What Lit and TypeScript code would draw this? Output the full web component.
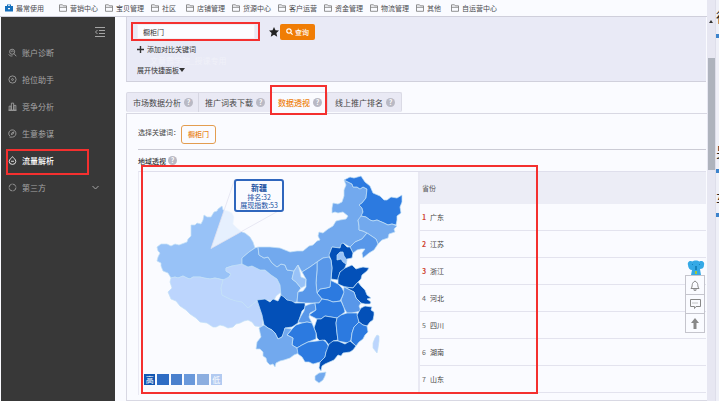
import { LitElement, html, svg, css } from "lit";
import { customElement } from "lit/decorators.js";
import { classMap } from "lit/directives/class-map.js";

const bookmarks = ["营销中心", "宝贝管理", "社区", "店铺管理", "货源中心", "客户运营", "资金管理", "物流管理", "其他", "自运营中心"];

const glyphs = {
  search: svg`<circle cx="5.5" cy="5" r="3.4"/><path d="M8 7.5l3 3.5M1 8.5c1 2 3 2.5 5 2M4.5 5.5a1.2 1.2 0 1 1 2 0"/>`,
  target: svg`<circle cx="6" cy="6" r="4.8"/><circle cx="6" cy="6" r="1.2"/>`,
  bars: svg`<path d="M1.500 11V5.500h2.500V11zM4.500 11V1.500h3V11zM8 11V4.500h2.500V11zM.5 11h11"/>`,
  compass: svg`<path d="M2.500 9.500A4.800 4.800 0 1 1 6 10.800H2M4.500 7.500L5.200 5.200l2.600-1.300-.8 2.500z"/>`,
  drop: svg`<path d="M6 .8C7 2.500 10.400 4.500 10.400 7.200a4.400 4 0 0 1-8.800 0C1.600 4.500 5 2.500 6 .8zM4 7h4"/>`,
  ring: svg`<circle cx="6" cy="6" r="4.6" stroke-dasharray="6 1"/>`,
};

const menu: { label: string; icon: keyof typeof glyphs; active?: boolean; more?: boolean }[] = [
  { label: "账户诊断", icon: "search" },
  { label: "抢位助手", icon: "target" },
  { label: "竞争分析", icon: "bars" },
  { label: "生意参谋", icon: "compass" },
  { label: "流量解析", icon: "drop", active: true },
  { label: "第三方", icon: "ring", more: true },
];

const tabs = ["市场数据分析", "推广词表下载", "数据透视", "线上推广排名"];
const provinces = ["广东", "江苏", "浙江", "河北", "四川", "湖南", "山东"];

// Shade level (0 = highest) and outline of every region on the map.
const regions: [string, number, string][] = [
  ["新疆", 4, "222,206 218,209 217,211 214,212 211,217 207,217 204,215 203,220 201,224 197,223 195,225 191,225 191,236 188,239 187,242 179,245 175,244 171,246 167,244 161,244 157,247 158,251 160,253 158,257 157,261 161,263 161,266 163,271 168,273 171,278 175,277 178,278 183,276 187,278 190,279 193,277 200,277 204,278 210,279 215,278 220,279 228,281 229,277 231,274 226,271 226,268 232,266 238,266 242,264 242,258 249,252 255,248 253,242 250,237 245,233 242,232 237,228 233,224 234,217 232,213 228,211 223,210"],
  ["西藏", 5, "171,278 175,277 178,278 183,276 187,278 190,279 193,277 200,277 204,278 210,279 215,278 223,280 221,288 222,295 230,299 242,302 248,308 253,304 258,300 262,306 263,317 262,327 255,326 252,322 248,320 244,321 240,323 236,324 233,327 228,328 224,326 220,325 216,327 213,327 207,323 200,322 196,318 190,314 186,310 180,306 176,301 171,299 168,292 172,288 170,282"],
  ["青海", 5, "229,277 231,274 226,271 226,268 232,266 242,264 248,267 252,266 260,270 265,270 271,275 277,279 280,285 281,292 276,296 273,302 268,300 258,300 253,304 248,308 242,302 236,301 230,299 222,295 221,288 223,280"],
  ["甘肃", 3, "242,264 242,258 249,252 255,248 258,247 259,255 264,258 268,257 272,263 277,267 281,264 285,265 287,270 294,271 292,279 296,282 301,288 298,292 297,302 290,303 286,299 281,296 280,285 277,279 271,275 265,270 260,270 252,266 248,267"],
  ["内蒙古", 3, "258,247 270,247 280,248 290,252 297,251 303,251 309,246 313,245 317,241 320,240 318,236 319,232 323,233 328,229 333,226 336,221 340,220 346,219 348,216 343,212 338,213 335,212 332,213 332,208 333,203 338,204 342,202 344,196 344,190 346,185 344,180 348,182 352,184 353,187 357,187 360,189 363,187 367,189 366,198 362,203 359,205 362,208 363,212 361,217 358,220 359,226 359,230 363,231 367,233 362,239 355,242 350,247 343,243 340,248 332,247 330,253 329,258 323,258 317,262 310,267 302,272 298,265 294,271 287,270 285,265 281,264 277,267 272,263 268,257 264,258 259,255"],
  ["黑龙江", 1, "344,180 346,179 350,177 354,178 361,176 365,182 370,186 373,193 380,196 384,200 387,200 391,197 397,198 402,195 402,202 400,207 401,213 397,216 397,220 396,225 392,224 388,225 384,223 377,220 373,221 370,220 366,217 361,216 363,212 362,208 359,205 362,203 366,198 367,189 363,187 360,189 357,187 353,187 352,184 348,182"],
  ["吉林", 3, "361,216 366,217 370,220 373,221 377,220 384,223 388,225 392,224 397,226 394,229 395,232 389,234 388,238 385,239 382,240 378,244 376,239 373,237 367,233 363,231 359,230 359,226 358,220"],
  ["辽宁", 2, "367,233 373,237 376,239 378,244 374,250 369,253 363,258 362,253 365,249 361,249 357,250 353,253 350,247 355,242 362,239"],
  ["河北", 0, "332,247 340,248 341,244 343,243 347,247 350,247 353,253 352,258 347,259 346,265 344,270 340,272 338,280 331,279 332,268 331,260 329,255"],
  ["京津", 4, "337,255 340,252 343,252 344,256 347,260 346,264 343,262 341,259 337,260"],
  ["山东", 0, "340,272 345,268 352,265 356,269 359,268 363,267 369,268 367,271 362,275 361,279 357,283 353,288 345,287 338,284 338,278"],
  ["江苏", 0, "345,287 353,288 358,282 361,286 365,290 367,295 371,298 367,299 371,302 370,304 365,304 361,303 356,298 354,292 350,290"],
  ["安徽", 2, "344,287 350,290 354,292 356,298 361,303 359,306 361,311 352,313 347,313 344,308 341,300 343,295"],
  ["河南", 1, "320,289 326,288 330,287 330,280 338,284 342,288 344,292 342,297 340,301 333,302 328,300 322,299 317,293"],
  ["山西", 2, "317,262 323,258 329,257 331,260 332,268 331,279 330,287 326,288 320,289 317,293 316,283 317,270"],
  ["陕西", 2, "310,267 317,262 317,270 316,283 317,293 322,299 319,303 315,303 305,303 297,302 298,292 303,291 306,287 306,279 302,272"],
  ["宁夏", 4, "294,271 298,265 300,272 301,277 306,279 305,286 301,288 296,282 292,279"],
  ["四川", 0, "257,300 265,299 270,302 273,299 278,301 281,295 284,297 287,300 292,301 295,303 305,303 305,308 302,311 300,317 298,323 292,327 285,328 284,333 282,337 278,339 275,333 272,330 268,328 264,325 262,315"],
  ["重庆", 2, "305,306 310,304 315,303 316,310 310,313 309,317 312,323 307,322 302,323 298,322 301,316 304,311"],
  ["湖北", 1, "315,303 319,303 322,299 328,300 333,302 341,301 344,308 345,312 341,315 337,318 331,317 325,316 321,319 317,319 309,315 316,310"],
  ["湖南", 0, "317,319 321,319 325,316 331,317 337,318 336,323 337,333 338,340 333,341 329,345 325,340 320,341 317,338 316,333 314,328"],
  ["江西", 1, "337,318 341,315 347,313 357,313 359,322 354,327 352,333 351,340 348,343 338,341 337,333 336,323"],
  ["浙江", 0, "361,308 365,306 372,307 371,310 374,312 374,315 373,320 370,322 367,326 363,325 359,322 357,315"],
  ["福建", 1, "359,322 363,325 367,326 368,332 365,335 363,339 359,342 356,346 351,341 352,333 354,327"],
  ["贵州", 1, "292,329 296,325 302,323 307,322 312,323 314,328 316,333 316,339 308,342 302,345 297,348 292,345 293,338 287,335"],
  ["云南", 3, "259,328 264,325 268,328 272,330 275,333 278,339 282,337 285,328 292,329 287,335 293,338 292,345 297,348 299,353 294,355 290,358 284,360 280,361 276,363 275,367 273,364 270,365 267,362 266,358 263,356 263,352 260,349 256,349 257,342 261,337"],
  ["广西", 1, "297,348 302,345 308,342 317,341 323,340 326,342 329,347 326,352 325,357 320,362 313,364 309,362 305,362 302,357 298,354"],
  ["广东", 0, "329,344 333,341 338,341 345,344 350,341 356,346 353,350 350,352 343,353 341,356 338,355 334,360 325,364 322,366 321,371 319,368 320,362 325,357 326,352"],
  ["海南", 3, "315,376 319,373 326,372 325,376 323,380 319,383 315,380"],
  ["台湾", 5, "377,335 379,336 379,341 378,348 377,353 373,348 373,343 375,338"],
];

@customElement("china-map")
export class ChinaMap extends LitElement {
  static styles = css`
    :host { display: block; position: relative; }
    .map { display: block; width: 100%; }
    .r0 { fill: #0350b8; } .r1 { fill: #2c7ae0; } .r2 { fill: #5897e9; }
    .r3 { fill: #72a9ee; } .r4 { fill: #98c2f7; } .r5 { fill: #bcd5fd; }
    .region { stroke: #c3e1f7; stroke-width: 0.7; stroke-linejoin: round; }
    .pointer { fill: #fafbff; fill-opacity: 0.8; stroke: #e2e2f0; stroke-width: 0.8; }
    .tip {
      position: absolute; left: 95px; top: 7px; width: 50px; box-sizing: border-box;
      border: 2px solid #2f66bd; border-radius: 3px; background: #fafbff;
      padding: 1px 0; text-align: center; font-size: 7px; line-height: 8px; color: #174f9f; white-space: nowrap;
    }
    .tip strong, .tip span { display: block; }
    .tip strong { font-size: 8px; line-height: 11px; }
    .legend {
      position: absolute; left: 5px; bottom: 10px; width: 78px; display: grid;
      grid-template-columns: repeat(6, 1fr); gap: 2px; font-size: 8px; line-height: 11px; color: #fff; text-align: center;
    }
    .legend span { height: 11px; overflow: hidden; }
    .l0 { background: #1358b4; } .l1 { background: #2e6cc4; } .l2 { background: #4a80cd; }
    .l3 { background: #6a99db; } .l4 { background: #8caee0; } .l5 { background: #b2caf1; }
  `;
  render() {
    return html`
      <svg class="map" viewBox="139 172 279 223" role="img" aria-label="地域透视">
        ${regions.map(([name, level, points]) => svg`<polygon class="region r${level}" points=${points}><title>${name}</title></polygon>`)}
        <path class="pointer" d="M234.500 180L211 248.500L281 209.500z" />
      </svg>
      <div class="tip"><strong>新疆</strong><span>排名:32</span><span>展现指数:53</span></div>
      <div class="legend">
        ${["高", "", "", "", "", "低"].map((t, i) => html`<span class="l${i}">${t}</span>`)}
      </div>`;
  }
}

@customElement("app-root")
export class AppRoot extends LitElement {
  static styles = css`
    :host {
      display: flex; min-height: 100vh; overflow: hidden; background: #fafbff; color: #444;
      font: 7px/10px "Noto Sans CJK SC", "Noto Sans", sans-serif;
    }
    * { box-sizing: border-box; }
    svg { display: block; fill: none; stroke: currentColor; flex: none; }
    svg.solid { stroke: none; fill: currentColor; }
    a { color: inherit; text-decoration: none; }
    button, input { font: inherit; color: inherit; margin: 0; padding: 0; }
    button { cursor: pointer; border: 0; background: none; }
    .window { flex: 1; min-width: 0; display: flex; flex-direction: column; }
    .bookmarks {
      height: 17px; display: flex; align-items: center; gap: 7px; padding-left: 5px;
      border-bottom: 1px solid #cfcfdb; white-space: nowrap; color: #4b4b50;
    }
    .bookmarks a { display: flex; align-items: center; gap: 3px; min-width: 28px; }
    .bookmarks a:first-child { margin-right: 8px; }
    .bookmarks svg { color: #777; }
    .body { flex: 1; display: flex; }
    .side { width: 114px; margin-left: 1px; background: #383838; color: #a5a5a5; font-size: 8px; flex: none; }
    .fold { display: block; margin: 10px 10px 2px auto; height: 10px; }
    .side a { display: flex; align-items: center; gap: 5px; height: 27px; padding: 0 16px 0 7px; position: relative; }
    .side .active { color: #fff; font-weight: 500; }
    .side .chevron { margin-left: auto; }
    .mark::after { content: ""; position: absolute; border: 2px solid #f4302f; pointer-events: none; z-index: 2; }
    .side .mark::after { left: 5px; right: 26px; top: 2px; bottom: -1px; }
    .main { flex: 1; min-width: 0; padding-left: 11px; position: relative; }
    .search {
      height: 65px; background: #e9eaf6; border-left: 1px solid #d4d4e0; border-bottom: 1px solid #d0d0dc;
      padding: 7px 10px 0; margin-right: 1px; position: relative; color: #333;
    }
    .line { display: flex; align-items: center; height: 15px; }
    .field { position: relative; width: 118px; height: 15px; }
    .field input { width: 100%; height: 15px; border: 1px solid #f0f0f6; background: #fcfcff; padding: 0 5px; display: block; outline: 0; }
    .field.mark::after { inset: -2px -5px -2px -6px; }
    .star { margin: 0 1px 0 14px; color: #222; }
    .go { display: flex; align-items: center; justify-content: center; gap: 2px; width: 35px; height: 16px; border-radius: 2px; background: #f07d05; color: #fff; font-weight: 500; }
    .add, .expand { display: flex; align-items: center; gap: 3px; margin-top: 5px; }
    .expand { margin-top: 11px; gap: 0; }
    .water { position: absolute; left: 23px; top: 40px; font-size: 8px; line-height: 8px; color: #f0f1f9; }
    .tabs { display: flex; width: 276px; margin-top: 10px; height: 20px; background: #e9e9f4; border: 1px solid #dadae5; border-bottom: 0; border-radius: 2px; }
    .tabs button { display: flex; align-items: center; gap: 3px; padding: 0 5px 0 6px; font-size: 8px; border-right: 1px solid #d6d6e2; position: relative; white-space: nowrap; }
    .tabs button:last-child { border: 0; padding-left: 7px; }
    .tabs .on { background: #fafbff; color: #ee820d; font-weight: 500; padding-left: 7px; }
    .tabs .mark::after { inset: -8px 0 -3px -1px; }
    .help { width: 9px; height: 9px; border-radius: 50%; background: #b9b9c4; color: #fff; line-height: 9px; font-size: 7px; font-weight: 700; text-align: center; }
    .panel { margin: 1px 0 0; border: 1px solid #d8d8e3; border-right: 0; padding: 0 1px 5px 11px; }
    .pick { height: 36px; display: flex; align-items: center; gap: 1px; border-bottom: 1px solid #cbcbd5; color: #444; }
    .pick span { padding-bottom: 0; }
    .chip { width: 35px; height: 19px; border: 1px solid #e39d50; border-radius: 3px; color: #e88111; font-weight: 500; margin-top: 5px; }
    .title { display: flex; align-items: center; gap: 2px; height: 21px; margin: 0; font-size: 7px; font-weight: 500; color: #333; }
    .geo { position: relative; display: grid; grid-template-columns: 279px 1fr; border-top: 1px solid #dfdfec; border-left: 1px solid #e9e9f3; }
    .geo.mark::after { left: 2px; top: -7px; right: 168px; bottom: 1px; }
    table { border-collapse: separate; border-spacing: 0; width: 100%; border-left: 2px solid #e9e9f3; align-self: start; }
    th { height: 32px; padding: 0 2px; background: #ecedf6; text-align: left; font-weight: 400; color: #555; }
    td { height: 27px; padding: 0 2px; border-bottom: 1px solid #e3e3ee; }
    .rank { display: inline-block; width: 8px; color: #666; }
    .top { color: #cf4431; font-weight: 700; }
    .tools { position: absolute; right: 2px; top: 243px; width: 20px; z-index: 3; }
    .tools button { display: grid; place-items: center; width: 20px; height: 20px; border: 1px solid #c5c5cd; background: #fafbff; margin-top: -1px; color: #888; }
    .tools .pet { margin: 0 0 0 auto; }
    .scroll { width: 8px; background: #e7e7f2; flex: none; display: flex; flex-direction: column; align-items: center; padding-top: 20px; }
    .thumb { width: 7px; height: 112px; margin-top: 35px; background: #aeb3bd; }
    .edge { width: 4px; flex: none; background: #eff0f8; border-left: 1px solid #dedeea; overflow: hidden; color: #222; font-size: 14px; line-height: 16px; }
    .edge div { border-bottom: 4px solid #3d83cc; height: 38px; padding-top: 8px; white-space: nowrap; }
    .edge .second { margin-top: 97px; }
    .edge .third { height: 44px; padding-top: 17px; }
  `;

  private icon(name: keyof typeof glyphs) {
    return html`<svg width="9" height="9" viewBox="0 0 12 12" stroke-width="1.1">${glyphs[name]}</svg>`;
  }

  render() {
    const help = html`<span class="help">?</span>`;
    return html`
      <div class="window">
        <nav class="bookmarks">
          <a href="#"><svg class="solid" width="8" height="8" viewBox="0 0 8 8"><path fill="#1670bd" d="M0 2h2V.5h4V2h2v5.500H0z"/><path fill="#fafbff" d="M3 1.300h2V2H3zM3 4h2v1.200H3z"/></svg>最常使用</a>
          ${bookmarks.map((b) => html`<a href="#"><svg width="8" height="8" viewBox="0 0 8 8" stroke-width=".8"><path d="M.5 7.300V.8h3l.8 1h3.200v5.500zM.5 3.300h7"/></svg>${b}</a>`)}
        </nav>
        <div class="body">
          <nav class="side">
            <button class="fold" aria-label="收起菜单"><svg width="10" height="10" viewBox="0 0 10 10" stroke-width="1"><path d="M0 .5h10M4 3.500h6M4 6.500h6M0 9.500h10M2.500 3L.5 5l2 2"/></svg></button>
            ${menu.map((m) => html`
              <a href="#" class=${classMap({ active: !!m.active, mark: !!m.active })}>
                ${this.icon(m.icon)}${m.label}
                ${m.more ? html`<svg class="chevron" width="7" height="5" viewBox="0 0 7 5"><path d="M.5 1l3 3 3-3"/></svg>` : ""}
              </a>`)}
          </nav>
          <main class="main">
            <section class="search">
              <div class="line">
                <label class="field mark"><input aria-label="关键词" value="橱柜门" /></label>
                <svg class="star solid" width="10" height="10" viewBox="0 0 10 10"><path d="M5 .1l1.500 3.200 3.500.3-2.600 2.400.8 3.700L5 7.800 1.800 9.700l.8-3.700L0 3.600l3.500-.3z"/></svg>
                <button class="go"><svg width="7" height="7" viewBox="0 0 7 7" stroke-width="1.2"><circle cx="3" cy="3" r="2.2"/><path d="M4.600 4.600l2 2"/></svg>查询</button>
              </div>
              <button class="add"><svg width="7" height="7" viewBox="0 0 7 7" stroke-width="1.4"><path d="M3.500 0v7M0 3.500h7"/></svg>添加对比关键词</button>
              <button class="expand">展开快捷面板<svg class="solid" width="6" height="4" viewBox="0 0 6 4"><path d="M0 0h6L3 4z"/></svg></button>
              <span class="water">文章霸学院_授课专用</span>
            </section>
            <div class="tabs" role="tablist">
              ${tabs.map((t, i) => html`<button role="tab" class=${classMap({ on: i === 2, mark: i === 2 })}>${t}${help}</button>`)}
            </div>
            <section class="panel">
              <div class="pick"><span>选择关键词：</span><button class="chip">橱柜门</button></div>
              <h2 class="title">地域透视${help}</h2>
              <div class="geo mark">
                <china-map></china-map>
                <table>
                  <thead><tr><th>省份</th></tr></thead>
                  <tbody>
                    ${provinces.map((p, i) => html`<tr><td><span class="rank ${i < 3 ? "top" : ""}">${i + 1}</span>${p}</td></tr>`)}
                  </tbody>
                </table>
              </div>
            </section>
            <aside class="tools">
              <svg class="pet solid" width="18" height="16" viewBox="0 0 18 16"><path fill="#35a9e6" d="M1 5C0 2 3 0 5 1.500 7 0 11 0 12.500 1.500 15 0 18 2 17 5c0 3-2 4-4 4l1 6H4l1-5C3 10 1 8 1 5z"/><path fill="#1683bd" d="M5 4h1v1H5zM12 4h1v1h-1zM8 6h2v4H8z"/><path fill="#a1c93e" d="M8 11h2v3H8z"/></svg>
              <button aria-label="通知"><svg width="10" height="11" viewBox="0 0 10 11"><path d="M1 8.500c1.500-1.500 1-4 1.500-5S4 1.500 5 1c1 .5 2 1.500 2.500 2.500s0 3.500 1.500 5zM4 8.500v1.800h2V8.500"/></svg></button>
              <button aria-label="消息"><svg width="11" height="10" viewBox="0 0 11 10"><path d="M.5.5h10v7H6L4.500 9.500V7.500h-4z"/><path d="M2.500 4h6" stroke-dasharray="1 1"/></svg></button>
              <button aria-label="返回顶部"><svg class="solid" width="8" height="11" viewBox="0 0 8 11"><path d="M4 0l4 5H5.500v6h-3V5H0z"/></svg></button>
            </aside>
          </main>
        </div>
      </div>
      <div class="scroll">
        <svg class="solid" width="4" height="3" viewBox="0 0 4 3"><path fill="#333" d="M0 3l2-3 2 3z"/></svg>
        <div class="thumb"></div>
      </div>
      <div class="edge"><div>待</div><div class="second">另</div><div class="third">车</div></div>
    `;
  }
}
